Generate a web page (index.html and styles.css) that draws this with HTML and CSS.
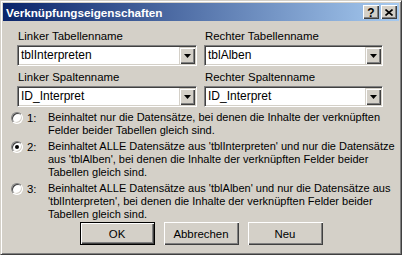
FILE: index.html
```html
<!DOCTYPE html>
<html lang="de">
<head>
<meta charset="utf-8">
<title>Verknüpfungseigenschaften</title>
<link rel="stylesheet" href="styles.css">
</head>
<body>
<div class="window">
  <div class="titlebar">
    <span class="title">Verknüpfungseigenschaften</span>
    <div class="title-buttons">
      <div class="tbtn help">?</div>
      <div class="tbtn close"><svg width="8" height="7" viewBox="0 0 8 7"><path d="M0.5 0.5L7.5 6.5M7.5 0.5L0.5 6.5" stroke="#000" stroke-width="1.6" fill="none"/></svg></div>
    </div>
  </div>
  <div class="content">
    <div class="fields">
      <div class="field">
        <div class="label">Linker Tabellenname</div>
        <div class="combo"><span class="value">tblInterpreten</span><span class="drop"><svg width="7" height="4" viewBox="0 0 7 4"><polygon points="0,0 7,0 3.5,4" fill="#000"/></svg></span></div>
      </div>
      <div class="field">
        <div class="label">Rechter Tabellenname</div>
        <div class="combo"><span class="value">tblAlben</span><span class="drop"><svg width="7" height="4" viewBox="0 0 7 4"><polygon points="0,0 7,0 3.5,4" fill="#000"/></svg></span></div>
      </div>
      <div class="field">
        <div class="label">Linker Spaltenname</div>
        <div class="combo"><span class="value">ID_Interpret</span><span class="drop"><svg width="7" height="4" viewBox="0 0 7 4"><polygon points="0,0 7,0 3.5,4" fill="#000"/></svg></span></div>
      </div>
      <div class="field">
        <div class="label">Rechter Spaltenname</div>
        <div class="combo"><span class="value">ID_Interpret</span><span class="drop"><svg width="7" height="4" viewBox="0 0 7 4"><polygon points="0,0 7,0 3.5,4" fill="#000"/></svg></span></div>
      </div>
    </div>
    <div class="options">
      <div class="option">
        <span class="radio"></span>
        <span class="num">1:</span>
        <span class="desc">Beinhaltet nur die Datensätze, bei denen die Inhalte der verknüpften<br>Felder beider Tabellen gleich sind.</span>
      </div>
      <div class="option">
        <span class="radio checked"></span>
        <span class="num">2:</span>
        <span class="desc">Beinhaltet ALLE Datensätze aus 'tblInterpreten' und nur die Datensätze<br>aus 'tblAlben', bei denen die Inhalte der verknüpften Felder beider<br>Tabellen gleich sind.</span>
      </div>
      <div class="option">
        <span class="radio"></span>
        <span class="num">3:</span>
        <span class="desc">Beinhaltet ALLE Datensätze aus 'tblAlben' und nur die Datensätze aus<br>'tblInterpreten', bei denen die Inhalte der verknüpften Felder beider<br>Tabellen gleich sind.</span>
      </div>
    </div>
    <div class="buttons">
      <div class="btn default">OK</div>
      <div class="btn">Abbrechen</div>
      <div class="btn">Neu</div>
    </div>
  </div>
</div>
</body>
</html>
```
FILE: styles.css
```css
* { box-sizing: border-box; }
html, body { margin: 0; padding: 0; background: #D4D0C8; }
body { font-family: "Liberation Sans", Arial, sans-serif; font-size: 11.4px; color: #000; }

.window {
  width: 402px;
  height: 255px;
  background: #D4D0C8;
  border: 1px solid;
  border-color: #D4D0C8 #404040 #404040 #D4D0C8;
  box-shadow: inset 1px 1px #FFFFFF, inset -1px -1px #808080;
  padding: 2px;
  display: flex;
  flex-direction: column;
}

.titlebar {
  height: 18px;
  background: linear-gradient(to right, #0A246A, #A6CAF0);
  display: flex;
  align-items: center;
  justify-content: space-between;
  padding: 0 2px 0 3px;
}
.title {
  color: #fff;
  font-weight: bold;
  font-size: 11.7px;
  line-height: 13px;
}
.title-buttons { display: flex; gap: 2px; }
.tbtn {
  width: 16px;
  height: 14px;
  background: #D4D0C8;
  box-shadow: inset 1px 1px #FFFFFF, inset -1px -1px #404040, inset -2px -2px #808080;
  display: flex;
  align-items: center;
  justify-content: center;
  font-weight: bold;
  font-size: 12px;
  line-height: 14px;
}
.tbtn.help { padding-top: 1px; }
.tbtn svg { display: block; }

.content {
  padding-top: 9px;
  display: flex;
  flex-direction: column;
}

.fields {
  margin-left: 14px;
  display: grid;
  grid-template-columns: 180px 179px;
  column-gap: 7px;
  row-gap: 5px;
}
.label {
  height: 13px;
  line-height: 13px;
  padding-left: 1px;
  margin-bottom: 2px;
}
.combo {
  height: 21px;
  background: #fff;
  border: 1px solid;
  border-color: #808080 #FFFFFF #FFFFFF #808080;
  box-shadow: inset 1px 1px #404040, inset -1px -1px #D4D0C8;
  padding: 1px;
  display: flex;
  align-items: center;
}
.value {
  flex: 1;
  padding-left: 2px;
  font-size: 12px;
  line-height: 17px;
}
.drop {
  width: 16px;
  height: 17px;
  background: #D4D0C8;
  box-shadow: inset 1px 1px #D4D0C8, inset 2px 2px #FFFFFF, inset -1px -1px #404040, inset -2px -2px #808080;
  display: flex;
  align-items: center;
  justify-content: center;
}
.drop svg { display: block; }

.options {
  margin-top: 4px;
  padding-left: 8px;
  display: flex;
  flex-direction: column;
  gap: 3px;
}
.option {
  display: grid;
  grid-template-columns: 12px 17px 1fr;
  column-gap: 4px;
  line-height: 13px;
  white-space: nowrap;
}
.desc { font-size: 11px; }
.radio {
  width: 12px;
  height: 12px;
  margin-top: 1px;
  border-radius: 50%;
  background: #fff;
  border: 1px solid;
  border-color: #808080 #FFFFFF #FFFFFF #808080;
  box-shadow: inset 1px 1px #404040, inset -1px -1px #D4D0C8;
  display: flex;
  align-items: center;
  justify-content: center;
}
.radio.checked::after {
  content: "";
  width: 4px;
  height: 4px;
  border-radius: 50%;
  background: #000;
}
.num { padding-top: 1px; }

.buttons {
  margin-top: 1px;
  display: flex;
  justify-content: center;
  gap: 9px;
}
.btn {
  width: 75px;
  height: 23px;
  background: #D4D0C8;
  box-shadow: inset 1px 1px #FFFFFF, inset -1px -1px #404040, inset -2px -2px #808080;
  display: flex;
  align-items: center;
  justify-content: center;
  font-size: 11.4px;
}
.btn.default {
  border: 1px solid #000;
}
```
